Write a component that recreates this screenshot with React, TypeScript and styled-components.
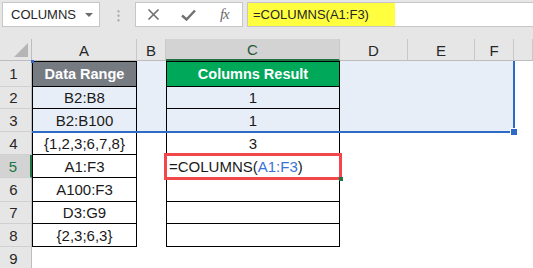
import React from 'react';
import styled, { createGlobalStyle, css } from 'styled-components';

const GlobalStyle = createGlobalStyle`
  html, body {
    margin: 0;
    padding: 0;
    background: #fff;
  }
  body {
    font-family: "Liberation Sans", Arial, sans-serif;
  }
`;

type Place = { $r: number; $c: number };

// every sheet item sits on its own grid line so the selection frame can overlap freely
const placed = css<Place>`
  grid-row: ${p => p.$r};
  grid-column: ${p => p.$c};
`;

const Window = styled.div`
  width: 533px;
  height: 268px;
  overflow: hidden;
  background: #fff;
`;

const FormulaBar = styled.div`
  display: flex;
  align-items: flex-start;
  height: 39px;
  box-sizing: border-box;
  padding: 2px 0 0 2px;
  background: #e6e6e6;
`;

const NameBox = styled.div`
  display: flex;
  align-items: center;
  justify-content: space-between;
  width: 98px;
  height: 25px;
  box-sizing: border-box;
  padding: 0 6px 0 8px;
  background: #fff;
  border: 1px solid #c6c6c6;
  font-size: 13px;
  color: #262626;
`;

const Caret = styled.span`
  width: 0;
  height: 0;
  border-left: 4px solid transparent;
  border-right: 4px solid transparent;
  border-top: 4px solid #6d6d6d;
`;

const Grip = styled.div`
  width: 3px;
  height: 13px;
  margin: 7px 15px 0 17px;
  background: radial-gradient(circle, #b0b0b0 1px, transparent 1.4px) 0 0 / 3px 4.5px repeat-y;
`;

const ButtonBox = styled.div`
  display: flex;
  align-items: center;
  width: 108px;
  height: 25px;
  box-sizing: border-box;
  background: #fff;
  border: 1px solid #c6c6c6;
`;

const ToolSlot = styled.span`
  display: flex;
  align-items: center;
  justify-content: center;
  width: 36px;
  height: 100%;
  color: #6e6e6e;
`;

const Fx = styled.span`
  font-family: "Liberation Serif", "Times New Roman", serif;
  font-style: italic;
  font-size: 15px;
  color: #6a6a6a;
  letter-spacing: -1px;
`;

const FormulaField = styled.div`
  display: flex;
  flex: 1;
  height: 25px;
  margin-left: 4px;
  box-sizing: border-box;
  background: #fff;
  border: 1px solid #c6c6c6;
  border-right: none;
`;

const Highlight = styled.div`
  width: 147px;
  height: 100%;
  box-sizing: border-box;
  padding-left: 5px;
  background: #ffff40;
  font-size: 13px;
  line-height: 23px;
  color: #262626;
`;

const Sheet = styled.div`
  display: grid;
  grid-template-columns: 32px 105px 29px 174px 68px 67px 39px 1fr;
  grid-template-rows: 22px 26px 22px 23px 23px 23px 24px 22px 23px 23px;
  background: #fff;
  font-size: 15px;
  color: #1a1a1a;
`;

const Corner = styled.div`
  grid-row: 1;
  grid-column: 1;
  display: flex;
  align-items: flex-end;
  justify-content: flex-end;
  padding: 0 3px 3px 0;
  box-sizing: border-box;
  background: #e6e6e6;
  border-right: 1px solid #bdbdbd;
  border-bottom: 1px solid #bdbdbd;
`;

const CornerMark = styled.span`
  width: 0;
  height: 0;
  border-left: 14px solid transparent;
  border-bottom: 14px solid #b5b5b5;
`;

const ColHead = styled.div<Place & { $active?: boolean }>`
  ${placed};
  display: flex;
  align-items: center;
  justify-content: center;
  box-sizing: border-box;
  padding-top: 1px;
  background: ${p => (p.$active ? '#d3d3d3' : '#e6e6e6')};
  border-right: 1px solid #c8c8c8;
  border-bottom: ${p => (p.$active ? '2px solid #217346' : '1px solid #bdbdbd')};
  color: ${p => (p.$active ? '#1e5a3a' : '#262626')};
`;

const RowHead = styled.div<Place & { $active?: boolean }>`
  ${placed};
  display: flex;
  align-items: center;
  justify-content: center;
  box-sizing: border-box;
  padding-right: 4px;
  background: ${p => (p.$active ? '#d3d3d3' : '#e6e6e6')};
  border-right: ${p => (p.$active ? '2px solid #217346' : '1px solid #bdbdbd')};
  border-bottom: 1px solid #d0d0d0;
  color: ${p => (p.$active ? '#217346' : '#262626')};
`;

const Cell = styled.div<
  Place & {
    $fill?: string;
    $box?: boolean;
    $top?: boolean;
    $bold?: boolean;
    $ink?: string;
  }
>`
  ${placed};
  display: flex;
  align-items: center;
  justify-content: center;
  box-sizing: border-box;
  white-space: nowrap;
  background: ${p => p.$fill || '#fff'};
  border-left: ${p => (p.$box ? '1px solid #000' : 'none')};
  border-right: ${p => (p.$box ? '1px solid #000' : 'none')};
  border-bottom: ${p => (p.$box ? '1px solid #000' : 'none')};
  border-top: ${p => (p.$top ? '1px solid #000' : 'none')};
  font-weight: ${p => (p.$bold ? 700 : 400)};
  font-size: ${p => (p.$bold ? '14.5px' : '15px')};
  color: ${p => p.$ink || '#1a1a1a'};
`;

const EditCell = styled(Cell)`
  position: relative;
  z-index: 2;
  justify-content: flex-start;
  padding-left: 2px;
  outline: 3px solid #f2474b;
  outline-offset: -1px;

  &::after {
    content: '';
    position: absolute;
    right: -4px;
    bottom: -4px;
    width: 4px;
    height: 4px;
    background: #217346;
  }
`;

const RefText = styled.span`
  color: #3a72d6;
`;

const Selection = styled.div`
  grid-column: 2 / 8;
  grid-row: 2 / 5;
  position: relative;
  z-index: 1;
  margin: 0 -1px -1px 0;
  border-right: 2px solid #2e6bc6;
  border-bottom: 2px solid #2e6bc6;
  pointer-events: none;

  &::before {
    content: '';
    position: absolute;
    left: -1px;
    top: -1px;
    width: 3px;
    height: 3px;
    background: #2e6bc6;
  }

  &::after {
    content: '';
    position: absolute;
    right: -5px;
    bottom: -5px;
    width: 6px;
    height: 6px;
    background: #2e6bc6;
    border: 1px solid #fff;
  }
`;

const SEL = '#e8eef8';
const GRAY = '#767b82';
const GREEN = '#00a85a';

const columns = ['A', 'B', 'C', 'D', 'E', 'F', ''];

const ranges = ['B2:B8', 'B2:B100', '{1,2,3;6,7,8}', 'A1:F3', 'A100:F3', 'D3:G9', '{2,3;6,3}'];
const results = ['1', '1', '3'];

function Toolbar() {
  return (
    <FormulaBar>
      <NameBox>
        COLUMNS
        <Caret />
      </NameBox>
      <Grip />
      <ButtonBox>
        <ToolSlot>
          <svg width="13" height="13" viewBox="0 0 13 13">
            <path d="M1.5 1.5 L11.5 11.5 M11.5 1.5 L1.5 11.5" stroke="#6e6e6e" strokeWidth="1.6" fill="none" />
          </svg>
        </ToolSlot>
        <ToolSlot>
          <svg width="15" height="12" viewBox="0 0 15 12">
            <path d="M1 6.5 L5.5 10.5 L14 1.5" stroke="#707070" strokeWidth="2.4" fill="none" />
          </svg>
        </ToolSlot>
        <ToolSlot>
          <Fx>fx</Fx>
        </ToolSlot>
      </ButtonBox>
      <FormulaField>
        <Highlight>=COLUMNS(A1:F3)</Highlight>
      </FormulaField>
    </FormulaBar>
  );
}

export default function App() {
  const items: React.ReactNode[] = [];
  for (let r = 1; r <= 9; r++) {
    const gr = r + 1;
    const inSel = r <= 3;
    const tableRow = r <= 8;
    items.push(
      <RowHead key={`h${r}`} $r={gr} $c={1} $active={r === 5}>
        {r}
      </RowHead>
    );
    // column A
    if (r === 1) {
      items.push(
        <Cell key="a1" $r={gr} $c={2} $box $top $bold $fill={GRAY} $ink="#fff">
          Data Range
        </Cell>
      );
    } else {
      items.push(
        <Cell key={`a${r}`} $r={gr} $c={2} $box={tableRow} $fill={inSel ? SEL : undefined}>
          {ranges[r - 2] || ''}
        </Cell>
      );
    }
    // column B
    items.push(<Cell key={`b${r}`} $r={gr} $c={3} $fill={inSel ? SEL : undefined} />);
    // column C
    if (r === 1) {
      items.push(
        <Cell key="c1" $r={gr} $c={4} $box $top $bold $fill={GREEN} $ink="#fff">
          Columns Result
        </Cell>
      );
    } else if (r === 5) {
      items.push(
        <EditCell key="c5" $r={gr} $c={4} $box>
          =COLUMNS(<RefText>A1:F3</RefText>)
        </EditCell>
      );
    } else {
      items.push(
        <Cell key={`c${r}`} $r={gr} $c={4} $box={tableRow} $fill={inSel ? SEL : undefined}>
          {results[r - 2] || ''}
        </Cell>
      );
    }
    // columns D..G
    [5, 6, 7, 8].forEach(c =>
      items.push(<Cell key={`x${c}-${r}`} $r={gr} $c={c} $fill={inSel && c !== 8 ? SEL : undefined} />)
    );
  }

  return (
    <Window>
      <GlobalStyle />
      <Toolbar />
      <Sheet>
        <Corner>
          <CornerMark />
        </Corner>
        {columns.map((c, i) => (
          <ColHead key={c || 'g'} $r={1} $c={i + 2} $active={c === 'C'}>
            {c}
          </ColHead>
        ))}
        {items}
        <Selection />
      </Sheet>
    </Window>
  );
}
